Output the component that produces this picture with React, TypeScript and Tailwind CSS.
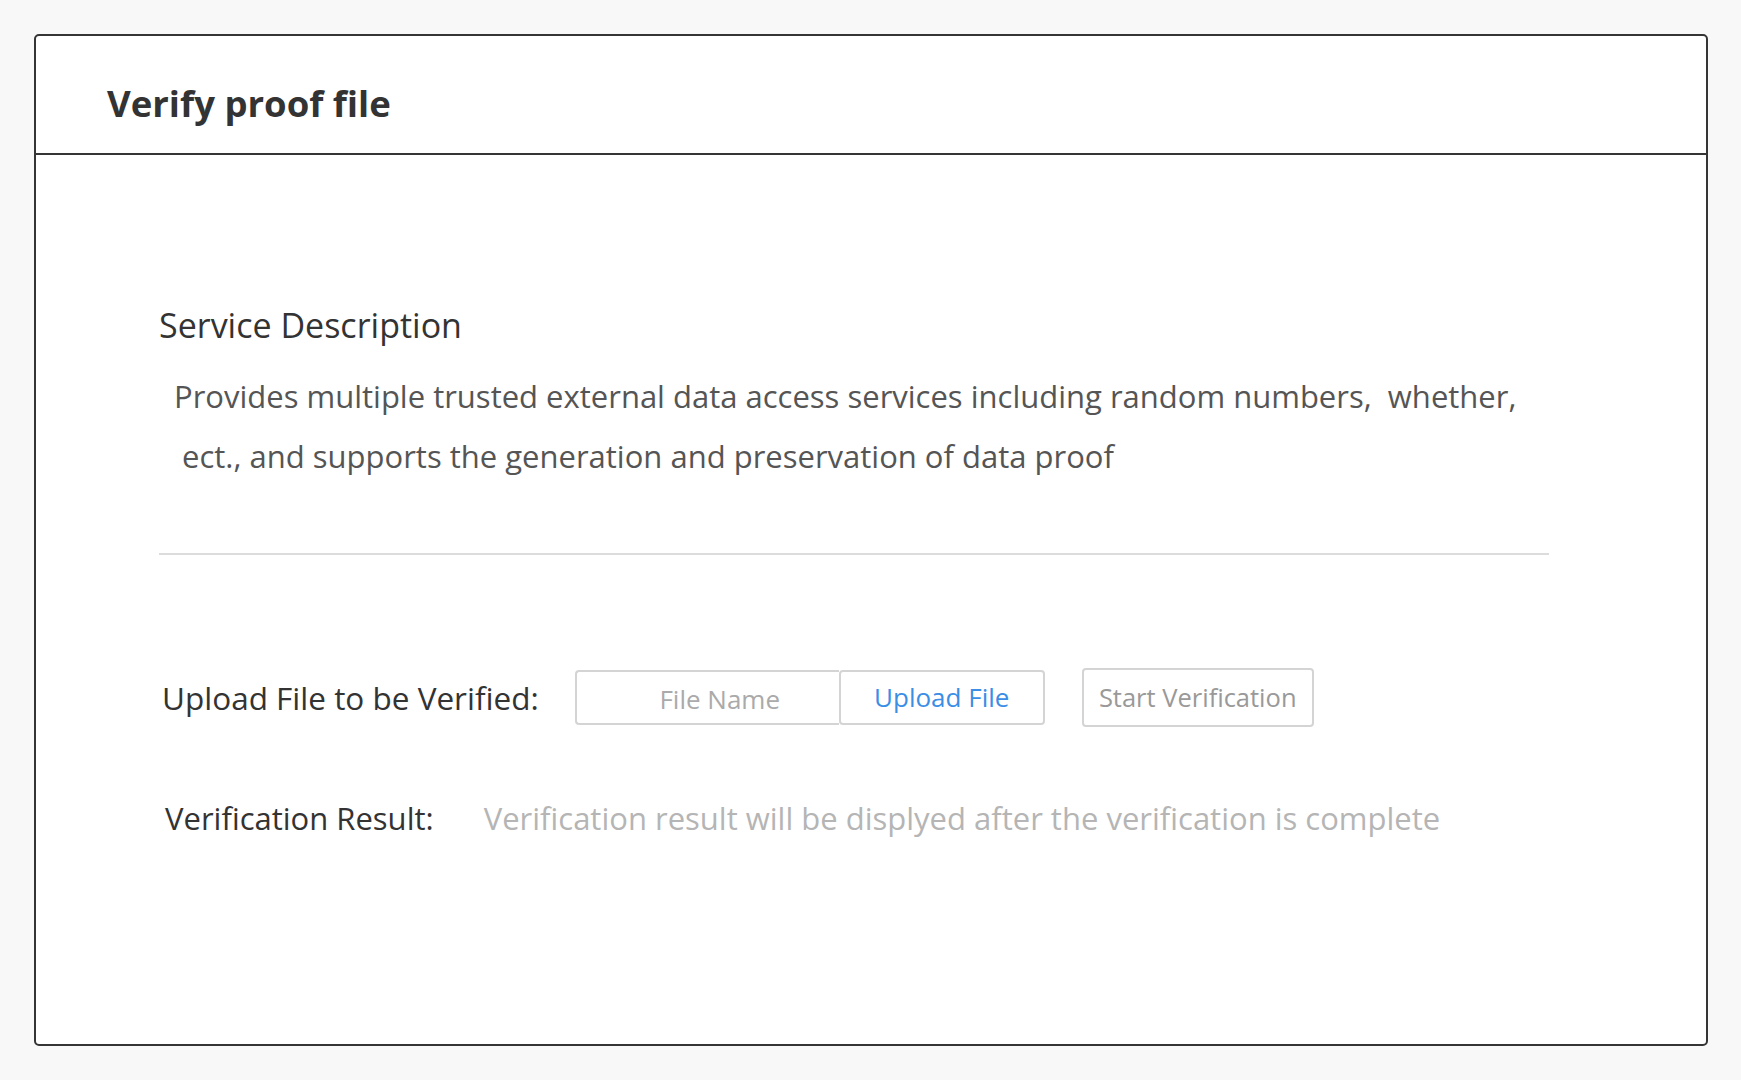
export default function App() {
  return (
    <div className="min-h-[1080px] w-[1741px] bg-[#f8f8f8] pl-[34px] pt-[34px] font-['Open_Sans',sans-serif]">
      <div className="flex h-[1012px] w-[1674px] flex-col rounded-[5px] border-2 border-[#353535] bg-white">
        <div className="flex h-[119px] items-center border-b-2 border-[#353535] pl-[71px] pt-[18px]">
          <h1 className="text-[36.5px] font-bold leading-none text-[#333333]">Verify proof file</h1>
        </div>

        <div className="flex flex-col pl-[123px]">
          <h2 className="mt-[150px] text-[34px] leading-[40px] text-[#333333]">Service Description</h2>
          <p className="mt-[21px] w-[1400px] pl-[15px] text-[31px] leading-[60px] text-[#555555]">
            Provides multiple trusted external data access services including random numbers,&nbsp; whether,
            <br />
            &nbsp;ect., and supports the generation and preservation of data proof
          </p>

          <div className="mt-[67px] h-[2px] w-[1390px] bg-[#dcdcdc]" />

          <div className="mt-[113px] flex items-center pl-[3px]">
            <span className="text-[31.5px] leading-[40px] text-[#333333]">Upload File to be Verified:</span>
            <div className="ml-[36px] flex h-[55px]">
              <div className="flex w-[264px] items-center justify-center rounded-l-[4px] border-2 border-r-0 border-[#d4d4d4] pl-[24px] pt-[4px] text-[26px] text-[#aaaaaa]">
                File Name
              </div>
              <button className="flex w-[206px] items-center justify-center rounded-[4px] border-2 border-[#d4d4d4] text-[26px] text-[#3a8ee6]">
                Upload File
              </button>
            </div>
            <button className="ml-[37px] flex h-[59px] w-[232px] items-center justify-center rounded-[4px] border-2 border-[#d4d4d4] text-[25.5px] text-[#999999]">
              Start Verification
            </button>
          </div>

          <div className="mt-[71px] flex items-center pl-[6px]">
            <span className="text-[31px] leading-[40px] text-[#333333]">Verification Result:</span>
            <span className="ml-[50px] text-[31px] leading-[40px] text-[#b5b5b5]">
              Verification result will be displyed after the verification is complete
            </span>
          </div>
        </div>
      </div>
    </div>
  );
}
